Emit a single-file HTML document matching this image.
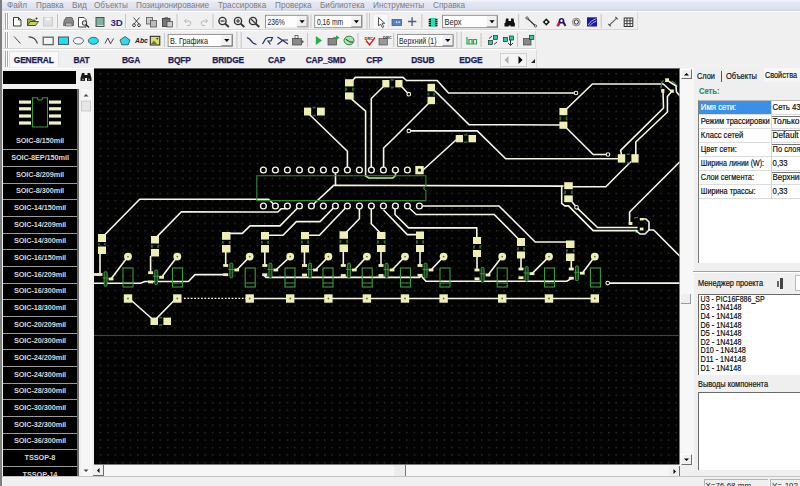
<!DOCTYPE html>
<html><head><meta charset="utf-8">
<style>
*{margin:0;padding:0;box-sizing:border-box}
html,body{width:800px;height:486px;overflow:hidden;background:#f0f0f0;font-family:"Liberation Sans", sans-serif;position:relative}
.a{position:absolute}
#menu{left:0;top:0;width:800px;height:11px;background:linear-gradient(#f3f5fb 0px,#e4e7f3 3px,#dee1ef 8.5px,#d3d5df 10px,#d6d8e0 11px)}
#menu span{position:absolute;top:2px;font-size:8.2px;color:#7c7c7c;line-height:8px;white-space:nowrap}
.tab{position:absolute;top:55.5px;width:60px;text-align:center;font-size:8.4px;font-weight:bold;color:#1c1c58;line-height:9px;-webkit-text-stroke:0.25px #1c1c58;letter-spacing:-0.15px}
.sep{position:absolute;left:0;width:75px;height:1px;background:#9c9c9c}
.it{position:absolute;left:0;width:74px;color:#d6d6d6;font-weight:bold;font-size:7.9px;line-height:10px;text-align:center;white-space:nowrap;letter-spacing:-0.1px;transform:scaleX(0.93)}
.pr{position:absolute;height:14.1px;font-size:7.9px;line-height:14px;padding-left:2px;white-space:nowrap;overflow:hidden}
.pv{background:#fff;border-left:1px solid #777;border-top:1px solid #777;color:#111;line-height:12px}
.hl{position:absolute;left:0;width:112px;height:1px;background:#d8d8d8}
.ic{position:absolute}
</style></head><body>
<div id="menu" class="a"><span style="left:7px">Файл</span><span style="left:36px">Правка</span><span style="left:72px">Вид</span><span style="left:94px">Объекты</span><span style="left:136px">Позиционирование</span><span style="left:218px">Трассировка</span><span style="left:275px">Проверка</span><span style="left:320px">Библиотека</span><span style="left:373px">Инструменты</span><span style="left:433px">Справка</span></div>
<div class="a" style="left:0;top:10.5px;width:800px;height:1px;background:#fbfbfd"></div>

<!-- toolbars -->
<div class="a" style="left:3px;top:11px;width:635px;height:19px;border-right:1px solid #dcdcdc;border-bottom:1px solid #d6d6d6;border-top:1px solid #fff"></div>
<div class="a" style="left:3px;top:30px;width:533px;height:19px;border-right:1px solid #dcdcdc;border-bottom:1px solid #d6d6d6;border-top:1px solid #fff"></div>
<div class="a" style="left:3px;top:49px;width:534px;height:19px;border-right:1px solid #dcdcdc;border-top:1px solid #fff"></div>
<svg class="a" style="left:0;top:0" width="800" height="68" viewBox="0 0 800 68">
<g stroke-width="1" fill="none">
<!-- grips -->
<path d="M5.5,13 V29 M7.5,13 V29 M5.5,32 V48 M7.5,32 V48 M5.5,51 V67 M7.5,51 V67" stroke="#a8a8a8"/>
<path d="M6.5,13 V29 M8.5,13 V29 M6.5,32 V48 M8.5,32 V48 M6.5,51 V67 M8.5,51 V67" stroke="#fff"/>
<!-- separators tb1 -->
<path d="M57.5,14 V28 M125.5,14 V28 M177,14 V28 M213,14 V28 M311,14 V28 M367,13 V29 M369.5,13 V29 M421.9,14 V28 M518.7,14 V28 M601.2,14 V28" stroke="#c4c4c4"/>
<!-- separators tb2 -->
<path d="M164.4,33 V47 M236.9,32 V48 M241.2,32 V48 M307.5,33 V47 M358,33 V47 M393.7,33 V47 M456.9,32 V48 M461.2,32 V48 M481,33 V47 M517.5,33 V47" stroke="#c4c4c4"/>
</g>
<!-- TB1 icons -->
<!-- new -->
<path d="M13.5,17.5 H18.5 L21,20 V26 H13.5 Z" fill="#fff" stroke="#222" stroke-width="0.9"/>
<path d="M18.5,17.5 V20 H21" fill="none" stroke="#222" stroke-width="0.8"/>
<!-- open -->
<path d="M27.5,19 H31 L32,20 H35 V25.5 H27.5 Z" fill="#a8b040" stroke="#333" stroke-width="0.8"/>
<path d="M27.5,25.5 L30,21.5 H38.5 L35.5,25.5 Z" fill="#c8d060" stroke="#333" stroke-width="0.8"/>
<circle cx="36.5" cy="18.5" r="0.9" fill="#222"/>
<!-- save gray -->
<rect x="43.5" y="17.5" width="9" height="8.5" fill="#e0e0e0" stroke="#c8c8c8" stroke-width="0.9"/>
<rect x="45.5" y="17.5" width="5" height="3" fill="#f4f4f4"/>
<!-- print -->
<path d="M64,21 L66,17.5 H72 L73.5,21 V25.5 H63.5 Z" fill="#8a8a8a" stroke="#555" stroke-width="0.8"/>
<rect x="65.5" y="23" width="6.5" height="3" fill="#b8b8b8" stroke="#555" stroke-width="0.6"/>
<!-- preview -->
<path d="M78.5,17.5 H84 L86,19.5 V27 H78.5 Z" fill="#fff" stroke="#333" stroke-width="0.9"/>
<circle cx="84.5" cy="23" r="2.3" fill="#dde" stroke="#333" stroke-width="1"/>
<path d="M86,24.5 L89,27.5" stroke="#222" stroke-width="1.3"/>
<!-- board -->
<rect x="96" y="17.5" width="8" height="9" fill="#7fb0a0" stroke="#444" stroke-width="0.9"/>
<rect x="97.5" y="25" width="6" height="1" fill="#ddd"/>
<!-- 3D -->
<text x="110.5" y="26" font-family="Liberation Sans" font-weight="bold" font-size="9.6" fill="#2a2a80">3D</text>
<!-- scissors -->
<path d="M133.5,17.5 L139,24 M139.5,17.5 L134,24" stroke="#333" stroke-width="0.9"/>
<circle cx="134" cy="25.2" r="1.4" fill="none" stroke="#333" stroke-width="0.9"/>
<circle cx="139" cy="25.2" r="1.4" fill="none" stroke="#333" stroke-width="0.9"/>
<!-- copy -->
<rect x="146.5" y="17.5" width="6" height="6.5" fill="#ccc" stroke="#555" stroke-width="0.8"/>
<rect x="150.5" y="20.5" width="6" height="6.5" fill="#bbb" stroke="#555" stroke-width="0.8"/>
<!-- paste -->
<rect x="162.5" y="18.5" width="7.5" height="8" fill="#777" stroke="#333" stroke-width="0.8"/>
<rect x="164.5" y="17.3" width="3.5" height="2" fill="#555"/>
<rect x="167" y="21.5" width="5.5" height="5.5" fill="#ccc" stroke="#444" stroke-width="0.7"/>
<!-- undo redo gray -->
<path d="M184.5,21 L186.5,19 M184.5,21 L186.5,23 M184.5,21 H189 A2.3,2.3 0 0 1 189,25.5 H187" fill="none" stroke="#b8b8b8" stroke-width="1"/>
<path d="M207.5,21 L205.5,19 M207.5,21 L205.5,23 M207.5,21 H203 A2.3,2.3 0 0 0 203,25.5 H205" fill="none" stroke="#b8b8b8" stroke-width="1"/>
<!-- zooms -->
<g stroke="#333" fill="#e8eef0">
<circle cx="222.5" cy="21" r="3.6" stroke-width="1.4"/><path d="M225,23.5 L228.8,27" stroke-width="1.8"/><path d="M220.5,21 H224.5" stroke-width="1.2"/>
<circle cx="238" cy="21" r="3.6" stroke-width="1.4"/><path d="M240.5,23.5 L244.3,27" stroke-width="1.8"/><path d="M236,21 H240 M238,19 V23" stroke-width="1.1"/>
<circle cx="253" cy="21" r="3.6" stroke-width="1.4"/><path d="M255.5,23.5 L259.3,27" stroke-width="1.8"/><path d="M251,19 L255,23" stroke-width="1.1"/>
</g>
<!-- arrow cursor pressed bg -->
<rect x="373" y="14" width="15" height="15" fill="#f8f8f8" stroke="#e0e0e0" stroke-width="0.8"/>
<path d="M378.5,17.5 V26 L380.5,24 L382.5,27.5 L383.8,26.8 L382,23.3 H384.8 Z" fill="#fff" stroke="#444" stroke-width="0.9"/>
<!-- blue rect -->
<rect x="392" y="19.5" width="9.5" height="6" fill="#5a82c8" stroke="#33508a" stroke-width="0.7"/>
<rect x="396" y="21.5" width="1.3" height="1.3" fill="#fff"/><rect x="398.5" y="21.5" width="1.3" height="1.3" fill="#fff"/>
<!-- plus -->
<path d="M408,21.5 H416.3 M412.1,17.3 V26" stroke="#556070" stroke-width="1.4"/>
<!-- chip -->
<rect x="430" y="17.9" width="6.2" height="8.9" fill="#26dcb0"/>
<g fill="#111"><rect x="428.7" y="18.8" width="2.2" height="1.5"/><rect x="428.7" y="20.8" width="2.2" height="1.5"/><rect x="428.7" y="22.8" width="2.2" height="1.5"/><rect x="428.7" y="24.8" width="2.2" height="1.5"/>
<rect x="435.3" y="18.8" width="2.2" height="1.5"/><rect x="435.3" y="20.8" width="2.2" height="1.5"/><rect x="435.3" y="22.8" width="2.2" height="1.5"/><rect x="435.3" y="24.8" width="2.2" height="1.5"/></g>
<!-- binoculars -->
<path d="M505,25.5 L506,18.5 H508.5 V21 H511 V18.5 H513.5 L514.8,25.5 Z" fill="#111"/>
<rect x="504.5" y="23" width="4.3" height="3.5" fill="#111"/><rect x="510.5" y="23" width="4.3" height="3.5" fill="#111"/>
<!-- wire -->
<path d="M527,18 L535.5,26" stroke="#333" stroke-width="1.1"/>
<circle cx="527" cy="18" r="1.2" fill="#ddd" stroke="#333" stroke-width="0.7"/><circle cx="535.5" cy="26" r="1.2" fill="#ddd" stroke="#333" stroke-width="0.7"/>
<!-- diamond pad -->
<path d="M546.3,18.3 L550,22 L546.3,25.7 L542.6,22 Z" fill="#111" stroke="#8c8" stroke-width="0.4"/>
<circle cx="546.3" cy="22" r="1.2" fill="#fff"/>
<!-- A icon -->
<path d="M558,26 L560.5,20.5 M565.5,26 L562.5,20.5" stroke="#1a1a70" stroke-width="2"/>
<path d="M557.2,26.2 L559.6,21.5" stroke="#d82050" stroke-width="2"/>
<circle cx="561.5" cy="20.8" r="2.8" fill="#1a1a70"/>
<circle cx="561.5" cy="20.8" r="1.2" fill="#fff"/>
<!-- ring -->
<circle cx="576.3" cy="22" r="3.9" fill="#d8d8d8" stroke="#888" stroke-width="0.9"/>
<circle cx="576.3" cy="22" r="2.1" fill="#fff" stroke="#333" stroke-width="1"/>
<!-- blue square -->
<rect x="587" y="17.3" width="10" height="9.2" fill="#1818a8"/>
<path d="M588,25 Q591,20 596.5,18.5 M589.5,26 Q592.5,22 596.5,21" fill="none" stroke="#d8d8f8" stroke-width="0.8"/>
<!-- measure -->
<path d="M609,25.5 L617,17.8" stroke="#666" stroke-width="1.1"/>
<path d="M608.3,23.8 L610.8,26.3 M615.3,16.8 L617.8,19.3" stroke="#555" stroke-width="1.2"/>
<!-- grid -->
<rect x="624.2" y="18" width="8.6" height="8.5" fill="#f4f4f4" stroke="#333" stroke-width="1"/>
<path d="M627,18 V26.5 M630,18 V26.5 M624.2,20.8 H632.8 M624.2,23.6 H632.8" stroke="#333" stroke-width="0.9"/>

<!-- combos tb1 -->
<g>
<rect x="265.5" y="15.3" width="42.5" height="12.4" fill="#fdfdfd" stroke="#8a8a8a" stroke-width="0.9"/>
<path d="M266,27.3 H307.6 V15.7" stroke="#fff" fill="none"/>
<rect x="297" y="16.2" width="10.2" height="10.6" fill="#f0f0f0"/><path d="M297,26.8 H307.2 V16.2" stroke="#777" stroke-width="0.8" fill="none"/>
<path d="M299.5,20.2 H304.7 L302.1,23.2 Z" fill="#000"/>
<text x="267.5" y="24.5" font-family="Liberation Sans" font-size="8.4" fill="#222" textLength="17.2" lengthAdjust="spacingAndGlyphs">236%</text>
<rect x="314.7" y="15.3" width="47.3" height="12.4" fill="#fdfdfd" stroke="#8a8a8a" stroke-width="0.9"/>
<rect x="351.3" y="16.2" width="10.2" height="10.6" fill="#f0f0f0"/><path d="M351.3,26.8 H361.5 V16.2" stroke="#777" stroke-width="0.8" fill="none"/>
<path d="M353.8,20.2 H359.0 L356.4,23.2 Z" fill="#000"/>
<text x="317" y="24.5" font-family="Liberation Sans" font-size="8.4" fill="#222" textLength="26.2" lengthAdjust="spacingAndGlyphs">0,16 mm</text>
<rect x="442.5" y="15.3" width="55" height="12.4" fill="#fdfdfd" stroke="#8a8a8a" stroke-width="0.9"/>
<rect x="486.9" y="16.2" width="10.2" height="10.6" fill="#f0f0f0"/><path d="M486.9,26.8 H497.1 V16.2" stroke="#777" stroke-width="0.8" fill="none"/>
<path d="M489.4,20.2 H494.6 L492.0,23.2 Z" fill="#000"/>
<text x="444.5" y="24.5" font-family="Liberation Sans" font-size="8.4" fill="#222" textLength="17" lengthAdjust="spacingAndGlyphs">Верх</text>
</g>
<!-- combos tb2 -->
<g>
<rect x="168.1" y="34.4" width="64.4" height="12" fill="#fdfdfd" stroke="#8a8a8a" stroke-width="0.9"/>
<rect x="221.5" y="35.3" width="10.5" height="10.3" fill="#f0f0f0"/><path d="M221.5,45.6 H232 V35.3" stroke="#777" stroke-width="0.8" fill="none"/>
<path d="M224.2,39.1 H229.4 L226.8,42.1 Z" fill="#000"/>
<text x="170" y="43.6" font-family="Liberation Sans" font-size="8.4" fill="#222" textLength="38" lengthAdjust="spacingAndGlyphs">В. Графика</text>
<rect x="397.5" y="34.4" width="55.5" height="12" fill="#fdfdfd" stroke="#8a8a8a" stroke-width="0.9"/>
<rect x="442.5" y="35.3" width="10.5" height="10.3" fill="#f0f0f0"/><path d="M442.5,45.6 H453 V35.3" stroke="#777" stroke-width="0.8" fill="none"/>
<path d="M445.2,39.1 H450.4 L447.8,42.1 Z" fill="#000"/>
<text x="399" y="43.6" font-family="Liberation Sans" font-size="8.2" fill="#222" textLength="37.5" lengthAdjust="spacingAndGlyphs">Верхний (1)</text>
</g>

<!-- TB2 icons -->
<path d="M14,36.5 L20.5,43.5" stroke="#444" stroke-width="1"/>
<path d="M28.5,36.8 Q35,36.5 37.5,43.5" fill="none" stroke="#444" stroke-width="1.2"/>
<rect x="43.2" y="37.2" width="10" height="7.4" fill="#f4f4f4" stroke="#666" stroke-width="1.3"/>
<rect x="58.5" y="37" width="10" height="7.4" fill="#20e0f0" stroke="#445" stroke-width="0.9"/>
<ellipse cx="78.4" cy="40.8" rx="5" ry="3.3" fill="#f8f8f8" stroke="#555" stroke-width="0.9"/>
<ellipse cx="93.4" cy="40.8" rx="5" ry="3.5" fill="#20e0f0" stroke="#345" stroke-width="0.8"/>
<path d="M105,43.5 L107.8,38 L110.5,43.8 L113.5,38.5" fill="none" stroke="#333" stroke-width="0.9"/>
<path d="M125,36.5 L130,40 L128.2,44.8 H121.8 L120,40 Z" fill="#30d8e8" stroke="#345" stroke-width="0.8"/>
<text x="135" y="43.3" font-family="Liberation Sans" font-weight="bold" font-style="italic" font-size="6.8" fill="#222">Abc</text>
<rect x="150.3" y="36.3" width="9.5" height="8.7" fill="#d8e070" stroke="#222" stroke-width="1"/>
<path d="M151,44 L154,40.5 L157,44 Z" fill="#707830"/><circle cx="157.3" cy="38.6" r="0.9" fill="#333"/>
<!-- route icons -->
<path d="M247,37.5 L249.5,39 L253,43 L256.5,44.5" fill="none" stroke="#223366" stroke-width="1.3"/>
<path d="M262.5,44 L265.5,39 L268,37.5 H272.5 L271,41 H268 L270.5,44.5" fill="none" stroke="#223366" stroke-width="1.2"/>
<path d="M277.5,37 L288,44 M277.5,44.5 L283,40 H288" fill="none" stroke="#223366" stroke-width="1.2"/>
<rect x="292.5" y="38.5" width="9" height="6.5" fill="#888" stroke="#444" stroke-width="0.7"/><rect x="295" y="35.5" width="3" height="3" fill="none" stroke="#444" stroke-width="0.7"/>
<path d="M302,40 L304,41.8 L302,43.5 Z" fill="#555"/>
<path d="M315.8,36 L322,40.5 L315.8,45 Z" fill="#28b040"/>
<rect x="328" y="38.5" width="8.5" height="6.5" fill="#888" stroke="#444" stroke-width="0.7"/>
<path d="M333,37.8 H337.5 M336,36 L338.5,37.8 L336,39.6" fill="none" stroke="#2a9a40" stroke-width="1.2"/>
<ellipse cx="349" cy="40.5" rx="5" ry="4.3" fill="#a8e0a8" stroke="#2a8a40" stroke-width="1"/>
<path d="M345.5,39 L350,42 H353" fill="none" stroke="#224" stroke-width="0.9"/>
<text x="364.5" y="40" font-family="Liberation Sans" font-weight="bold" font-size="4" fill="#333">DRC</text>
<path d="M366,40.5 L369.5,44.8 L375,37.5" fill="none" stroke="#d02020" stroke-width="1.4"/>
<rect x="379" y="38.5" width="8.5" height="6.5" fill="#999" stroke="#555" stroke-width="0.7"/>
<text x="383" y="38.6" font-family="Liberation Sans" font-weight="bold" font-size="4" fill="#333">DRC</text>
<path d="M467,37 V44 H477 M469,44 V39.5 H472 V44 M473.5,44 V39.5 H476.5 V44" fill="none" stroke="#28a848" stroke-width="1.2"/>
<rect x="488.5" y="40.5" width="4" height="4" fill="#40c0a0" stroke="#133" stroke-width="0.7"/><rect x="493.5" y="35.5" width="4" height="4" fill="#40c0a0" stroke="#133" stroke-width="0.7"/>
<path d="M489,38.5 L492,36 M497,42 L494,44.5" stroke="#222" stroke-width="0.9"/>
<rect x="503.5" y="37.5" width="4" height="4" fill="#40c0a0" stroke="#133" stroke-width="0.7"/><rect x="509.5" y="36" width="4" height="4" fill="#40c0a0" stroke="#133" stroke-width="0.7"/>
<path d="M508,43 L510.5,45.5 L513,43 M510.5,40 V45" fill="none" stroke="#222" stroke-width="0.9"/>
<rect x="523.5" y="38.5" width="7.5" height="6.5" fill="#888" stroke="#444" stroke-width="0.7"/>
<rect x="529.5" y="35.3" width="4.3" height="4.3" fill="#40c0a0" stroke="#133" stroke-width="0.7"/>
</svg>


<!-- tab row -->
<div class="a" style="left:8.5px;top:50.5px;width:50px;height:16px;background:#f9f9f9;border:1px solid #e2e2e2;border-bottom:none"></div>
<span class="tab" style="left:3.75px">GENERAL</span><span class="tab" style="left:51.5px">BAT</span><span class="tab" style="left:101.0px">BGA</span><span class="tab" style="left:149.35px">BQFP</span><span class="tab" style="left:198.14999999999998px">BRIDGE</span><span class="tab" style="left:246.60000000000002px">CAP</span><span class="tab" style="left:295.65px">CAP_SMD</span><span class="tab" style="left:344.4px">CFP</span><span class="tab" style="left:392.75px">DSUB</span><span class="tab" style="left:440.95px">EDGE</span>
<div class="a" style="left:500px;top:52.5px;width:27px;height:14px;border:1px solid #d0d0d0;background:#f4f4f4"></div>
<svg class="a" style="left:500px;top:52px" width="40" height="16" viewBox="0 0 40 16">
<path d="M8.5,4 L4.5,8 L8.5,12 Z" fill="#b0b0b0"/><path d="M18.5,4 L22.5,8 L18.5,12 Z" fill="#000"/>
<path d="M31,11 L35,7 L35,11 Z" fill="#222"/>
</svg>
<div class="a" style="left:3px;top:67.5px;width:91px;height:1px;background:#fff"></div>

<!-- left panel -->
<div class="a" style="left:3px;top:71.4px;width:73px;height:12.4px;background:#000"></div>
<svg class="a" style="left:80px;top:72px" width="12" height="10" viewBox="0 0 12 10">
<path d="M2,1 h2.5 v2 h3 v-2 h2.5 l1.5,5 v3 h-4.5 v-3 h-2 v3 h-4.5 v-3 Z" fill="#1a1a1a"/>
<circle cx="3" cy="7.6" r="1" fill="#888"/><circle cx="9" cy="7.6" r="1" fill="#888"/>
</svg>
<div class="a" style="left:3px;top:89.3px;width:74px;height:387px;background:#000;overflow:hidden">
<svg style="position:absolute;left:0;top:0" width="74" height="60" viewBox="0 0 74 60">
<g fill="#f2f0c8">
<rect x="16" y="11.5" width="12" height="3.2"/><rect x="16" y="18.2" width="12" height="3.2"/><rect x="16" y="25.4" width="12" height="3.2"/><rect x="16" y="32.4" width="12" height="3.2"/>
<rect x="46" y="11.5" width="12" height="3.2"/><rect x="46" y="18.2" width="12" height="3.2"/><rect x="46" y="25.4" width="12" height="3.2"/><rect x="46" y="32.4" width="12" height="3.2"/>
</g>
<path d="M29.5,8.7 H34.5 A2.5,2.5 0 0 0 39.5,8.7 H44.5 V38 H29.5 Z" fill="none" stroke="#3a9a3a" stroke-width="1.1"/>
</svg>
<div class="it" style="top:46.5px">SOIC-8/150mil</div>
<div class="sep" style="top:60px"></div><div class="it" style="top:63.80px">SOIC-8EP/150mil</div><div class="sep" style="top:77px"></div><div class="it" style="top:80.47px">SOIC-8/209mil</div><div class="sep" style="top:94px"></div><div class="it" style="top:97.14px">SOIC-8/300mil</div><div class="sep" style="top:110px"></div><div class="it" style="top:113.81px">SOIC-14/150mil</div><div class="sep" style="top:127px"></div><div class="it" style="top:130.48px">SOIC-14/209mil</div><div class="sep" style="top:144px"></div><div class="it" style="top:147.15px">SOIC-14/300mil</div><div class="sep" style="top:160px"></div><div class="it" style="top:163.82px">SOIC-16/150mil</div><div class="sep" style="top:177px"></div><div class="it" style="top:180.49px">SOIC-16/209mil</div><div class="sep" style="top:194px"></div><div class="it" style="top:197.16px">SOIC-16/300mil</div><div class="sep" style="top:210px"></div><div class="it" style="top:213.83px">SOIC-18/300mil</div><div class="sep" style="top:227px"></div><div class="it" style="top:230.50px">SOIC-20/209mil</div><div class="sep" style="top:244px"></div><div class="it" style="top:247.17px">SOIC-20/300mil</div><div class="sep" style="top:260px"></div><div class="it" style="top:263.84px">SOIC-24/209mil</div><div class="sep" style="top:277px"></div><div class="it" style="top:280.51px">SOIC-24/300mil</div><div class="sep" style="top:294px"></div><div class="it" style="top:297.18px">SOIC-28/300mil</div><div class="sep" style="top:310px"></div><div class="it" style="top:313.85px">SOIC-30/300mil</div><div class="sep" style="top:327px"></div><div class="it" style="top:330.52px">SOIC-32/300mil</div><div class="sep" style="top:344px"></div><div class="it" style="top:347.19px">SOIC-36/300mil</div><div class="sep" style="top:360px"></div><div class="it" style="top:363.86px">TSSOP-8</div><div class="sep" style="top:377px"></div><div class="it" style="top:380.53px">TSSOP-14</div>
</div>
<div class="a" style="left:77px;top:89.3px;width:1.5px;height:387px;background:#6c6c6c"></div>
<div class="a" style="left:80.5px;top:89.3px;width:11.5px;height:387px;background:#f6f6f6"></div>
<svg class="a" style="left:80px;top:90px" width="12" height="24" viewBox="0 0 12 24">
<path d="M3.5,6.5 L6,4 L8.5,6.5 Z" fill="#444"/>
<rect x="1.5" y="11" width="9" height="10" fill="#e6e6e6" stroke="#c4c4c4" stroke-width="0.8"/>
</svg>
<svg class="a" style="left:80px;top:464px" width="12" height="12" viewBox="0 0 12 12">
<path d="M3.5,5.5 L6,8 L8.5,5.5 Z" fill="#444"/>
</svg>

<!-- pcb -->
<svg class="a" style="left:0;top:0" width="800" height="486" viewBox="0 0 800 486">
<defs>
<pattern id="grid" x="99.7" y="73.1" width="7.475" height="7.475" patternUnits="userSpaceOnUse">
<rect x="0" y="0" width="1.4" height="1.4" fill="#2f2f2f"/>
</pattern>
<clipPath id="pc"><rect x="94" y="69" width="585.5" height="395.5"/></clipPath>
</defs>
<g clip-path="url(#pc)">
<rect x="94" y="69" width="586" height="396" fill="#030303"/>
<rect x="94" y="69" width="586" height="396" fill="url(#grid)"/>
<polyline points="310,115 347.4,151.3 347.4,168" fill="none" stroke="#f6f6e6" stroke-width="1.6" stroke-linejoin="round" stroke-linecap="round"/>
<polyline points="353,80 355.3,77.4 403,77.4 406.5,80.5 437.2,80.5 448.5,93 576,93" fill="none" stroke="#f6f6e6" stroke-width="1.6" stroke-linejoin="round" stroke-linecap="round"/>
<polyline points="352,99.3 365.6,111.2 365.6,176" fill="none" stroke="#f6f6e6" stroke-width="1.6" stroke-linejoin="round" stroke-linecap="round"/>
<polyline points="365.6,176 369,178 393,178 395.5,175.5 395.5,170" fill="none" stroke="#b8e890" stroke-width="1.6" stroke-linejoin="round" stroke-linecap="round"/>
<polyline points="383,87 371.3,98.5 371.3,170" fill="none" stroke="#f6f6e6" stroke-width="1.6" stroke-linejoin="round" stroke-linecap="round"/>
<polyline points="402,87 408.8,94.2" fill="none" stroke="#f6f6e6" stroke-width="1.6" stroke-linejoin="round" stroke-linecap="round"/>
<polyline points="435,91 469,124.6 560,125" fill="none" stroke="#f6f6e6" stroke-width="1.6" stroke-linejoin="round" stroke-linecap="round"/>
<polyline points="428,104 394,138 383.6,148 383.6,170" fill="none" stroke="#f6f6e6" stroke-width="1.6" stroke-linejoin="round" stroke-linecap="round"/>
<polyline points="408.8,130.9 477.3,130.9 505.7,158.7 618,158.7" fill="none" stroke="#f6f6e6" stroke-width="1.6" stroke-linejoin="round" stroke-linecap="round"/>
<polyline points="419.5,170 423,170 456,140" fill="none" stroke="#f6f6e6" stroke-width="1.6" stroke-linejoin="round" stroke-linecap="round"/>
<polyline points="567,108.5 592.4,84 663.3,84 670.5,90.5" fill="none" stroke="#f6f6e6" stroke-width="1.6" stroke-linejoin="round" stroke-linecap="round"/>
<polyline points="567,128.5 593.2,154.5 608,154.5" fill="none" stroke="#f6f6e6" stroke-width="1.6" stroke-linejoin="round" stroke-linecap="round"/>
<polyline points="663,91 663.5,108 620.6,150.4 621.5,155" fill="none" stroke="#f6f6e6" stroke-width="1.6" stroke-linejoin="round" stroke-linecap="round"/>
<polyline points="672,91 667.4,96.5 667.4,112 635.8,142 635.8,155" fill="none" stroke="#f6f6e6" stroke-width="1.6" stroke-linejoin="round" stroke-linecap="round"/>
<polyline points="630.5,162 605.8,186.7 573,186.7" fill="none" stroke="#f6f6e6" stroke-width="1.6" stroke-linejoin="round" stroke-linecap="round"/>
<polyline points="563,186.1 334,185.2 311.5,206" fill="none" stroke="#f6f6e6" stroke-width="1.6" stroke-linejoin="round" stroke-linecap="round"/>
<polyline points="335.5,170 335.5,185.2" fill="none" stroke="#f6f6e6" stroke-width="1.6" stroke-linejoin="round" stroke-linecap="round"/>
<polyline points="561.7,186.1 561.7,203.4 564.8,205.9 568.5,205.9 593.2,230.6 637,230.6" fill="none" stroke="#f6f6e6" stroke-width="1.6" stroke-linejoin="round" stroke-linecap="round"/>
<polyline points="572.5,202.5 576.5,207.3" fill="none" stroke="#f6f6e6" stroke-width="1.6" stroke-linejoin="round" stroke-linecap="round"/>
<polyline points="576.5,207.3 597.5,227.5 637,227.5" fill="none" stroke="#f6f6e6" stroke-width="1.6" stroke-linejoin="round" stroke-linecap="round"/>
<polyline points="679.6,162 629.6,212 629.6,224" fill="none" stroke="#f6f6e6" stroke-width="1.6" stroke-linejoin="round" stroke-linecap="round"/>
<polyline points="641,219 646,219 649,222 649,230 645,234 640,234 636,230.6" fill="none" stroke="#f6f6e6" stroke-width="1.6" stroke-linejoin="round" stroke-linecap="round"/>
<polyline points="649,230 653.7,230 680,256.3" fill="none" stroke="#f6f6e6" stroke-width="1.6" stroke-linejoin="round" stroke-linecap="round"/>
<polyline points="607.7,283.1 680,283.1" fill="none" stroke="#f6f6e6" stroke-width="1.6" stroke-linejoin="round" stroke-linecap="round"/>
<polyline points="105.3,234.3 139.7,199.3 268.6,199.3 275.5,206" fill="none" stroke="#f6f6e6" stroke-width="1.6" stroke-linejoin="round" stroke-linecap="round"/>
<polyline points="156.8,236.9 181.4,211.8 277.8,212 281.4,208.7 287.5,208.7 287.5,206" fill="none" stroke="#f6f6e6" stroke-width="1.6" stroke-linejoin="round" stroke-linecap="round"/>
<polyline points="299.5,206 280,225.9 250,225.9 242.4,233.4 226,233.4" fill="none" stroke="#f6f6e6" stroke-width="1.6" stroke-linejoin="round" stroke-linecap="round"/>
<polyline points="335.4,206 320,221.6 296.4,221.6 283,235.2 265,235.2" fill="none" stroke="#f6f6e6" stroke-width="1.6" stroke-linejoin="round" stroke-linecap="round"/>
<polyline points="347.3,206 319.4,235.3 305,235.3" fill="none" stroke="#f6f6e6" stroke-width="1.6" stroke-linejoin="round" stroke-linecap="round"/>
<polyline points="359.4,206 359.4,218.8 347.5,231 344,234" fill="none" stroke="#f6f6e6" stroke-width="1.6" stroke-linejoin="round" stroke-linecap="round"/>
<polyline points="371.3,206 371.3,223.8 379.3,232" fill="none" stroke="#f6f6e6" stroke-width="1.6" stroke-linejoin="round" stroke-linecap="round"/>
<polyline points="384,210.5 407.3,234.6 420,234.6" fill="none" stroke="#f6f6e6" stroke-width="1.6" stroke-linejoin="round" stroke-linecap="round"/>
<polyline points="395,206 395,214.5 408.6,227.9 476.8,227.9 476.8,240" fill="none" stroke="#f6f6e6" stroke-width="1.6" stroke-linejoin="round" stroke-linecap="round"/>
<polyline points="407,206 416.3,214.5 494.2,214.5 517.5,238" fill="none" stroke="#f6f6e6" stroke-width="1.6" stroke-linejoin="round" stroke-linecap="round"/>
<polyline points="419.5,206 499,206 535.2,242 570,242" fill="none" stroke="#f6f6e6" stroke-width="1.6" stroke-linejoin="round" stroke-linecap="round"/>
<polyline points="94,283.3 140.3,283.3 145,281.5 188.4,281.5 195,274.6 227,274.6" fill="none" stroke="#f6f6e6" stroke-width="1.6" stroke-linejoin="round" stroke-linecap="round"/>
<polyline points="263.2,274.7 266,277.4 420,277.4 420.3,275" fill="none" stroke="#f6f6e6" stroke-width="1.6" stroke-linejoin="round" stroke-linecap="round"/>
<polyline points="420.3,275 426,281.2 567,281.2 572,278" fill="none" stroke="#f6f6e6" stroke-width="1.6" stroke-linejoin="round" stroke-linecap="round"/>
<polyline points="253,298.5 594,298.5" fill="none" stroke="#f6f6e6" stroke-width="1.6" stroke-linejoin="round" stroke-linecap="round"/>
<line x1="184" y1="298.3" x2="246" y2="298.3" stroke="#f6f6e6" stroke-width="1.3" stroke-dasharray="1.8 1.6"/>
<polyline points="128,297.5 154,320.5" fill="none" stroke="#f6f6e6" stroke-width="1.6" stroke-linejoin="round" stroke-linecap="round"/>
<polyline points="177,297.5 155.5,319.5" fill="none" stroke="#f6f6e6" stroke-width="1.6" stroke-linejoin="round" stroke-linecap="round"/>
<polyline points="100.0,254 100.0,274.5" fill="none" stroke="#f6f6e6" stroke-width="1.6" stroke-linejoin="round" stroke-linecap="round"/>
<polyline points="111.0,279.0 128.0,256.6" fill="none" stroke="#f6f6e6" stroke-width="1.6" stroke-linejoin="round" stroke-linecap="round"/>
<rect x="123.0" y="268" width="10.0" height="19" fill="none" stroke="#3f9a3f" stroke-width="1.1"/>
<polyline points="123.5,283 132.5,283" fill="none" stroke="#3f9a3f" stroke-width="1.0" stroke-linejoin="round" stroke-linecap="round"/>
<polyline points="150.6,256.5 150.6,272.7" fill="none" stroke="#f6f6e6" stroke-width="1.6" stroke-linejoin="round" stroke-linecap="round"/>
<polyline points="161.6,277.3 177.3,256.6" fill="none" stroke="#f6f6e6" stroke-width="1.6" stroke-linejoin="round" stroke-linecap="round"/>
<rect x="172.5" y="268" width="10.0" height="19" fill="none" stroke="#3f9a3f" stroke-width="1.1"/>
<polyline points="173.0,283 182.0,283" fill="none" stroke="#3f9a3f" stroke-width="1.0" stroke-linejoin="round" stroke-linecap="round"/>
<polyline points="225.7,252.5 225.7,265.5" fill="none" stroke="#f6f6e6" stroke-width="1.6" stroke-linejoin="round" stroke-linecap="round"/>
<polyline points="236.7,270.0 249.7,256.6" fill="none" stroke="#f6f6e6" stroke-width="1.6" stroke-linejoin="round" stroke-linecap="round"/>
<rect x="245.2" y="268" width="10.0" height="19" fill="none" stroke="#3f9a3f" stroke-width="1.1"/>
<polyline points="245.7,283 254.7,283" fill="none" stroke="#3f9a3f" stroke-width="1.0" stroke-linejoin="round" stroke-linecap="round"/>
<polyline points="264.8,252.5 264.8,265.5" fill="none" stroke="#f6f6e6" stroke-width="1.6" stroke-linejoin="round" stroke-linecap="round"/>
<polyline points="275.8,270.0 290.2,256.6" fill="none" stroke="#f6f6e6" stroke-width="1.6" stroke-linejoin="round" stroke-linecap="round"/>
<rect x="285.0" y="268" width="10.0" height="19" fill="none" stroke="#3f9a3f" stroke-width="1.1"/>
<polyline points="285.5,283 294.5,283" fill="none" stroke="#3f9a3f" stroke-width="1.0" stroke-linejoin="round" stroke-linecap="round"/>
<polyline points="304.5,252.5 304.5,265.5" fill="none" stroke="#f6f6e6" stroke-width="1.6" stroke-linejoin="round" stroke-linecap="round"/>
<polyline points="315.5,270.0 328.4,256.6" fill="none" stroke="#f6f6e6" stroke-width="1.6" stroke-linejoin="round" stroke-linecap="round"/>
<rect x="323.0" y="268" width="10.0" height="19" fill="none" stroke="#3f9a3f" stroke-width="1.1"/>
<polyline points="323.5,283 332.5,283" fill="none" stroke="#3f9a3f" stroke-width="1.0" stroke-linejoin="round" stroke-linecap="round"/>
<polyline points="343.3,252 343.3,265.5" fill="none" stroke="#f6f6e6" stroke-width="1.6" stroke-linejoin="round" stroke-linecap="round"/>
<polyline points="354.3,270.0 366.9,256.6" fill="none" stroke="#f6f6e6" stroke-width="1.6" stroke-linejoin="round" stroke-linecap="round"/>
<rect x="362.2" y="268" width="10.0" height="19" fill="none" stroke="#3f9a3f" stroke-width="1.1"/>
<polyline points="362.7,283 371.7,283" fill="none" stroke="#3f9a3f" stroke-width="1.0" stroke-linejoin="round" stroke-linecap="round"/>
<polyline points="381.0,252 381.0,265.5" fill="none" stroke="#f6f6e6" stroke-width="1.6" stroke-linejoin="round" stroke-linecap="round"/>
<polyline points="392.0,270.0 405.0,256.6" fill="none" stroke="#f6f6e6" stroke-width="1.6" stroke-linejoin="round" stroke-linecap="round"/>
<rect x="400.5" y="268" width="10.0" height="19" fill="none" stroke="#3f9a3f" stroke-width="1.1"/>
<polyline points="401.0,283 410.0,283" fill="none" stroke="#3f9a3f" stroke-width="1.0" stroke-linejoin="round" stroke-linecap="round"/>
<polyline points="420.0,252 420.0,265.5" fill="none" stroke="#f6f6e6" stroke-width="1.6" stroke-linejoin="round" stroke-linecap="round"/>
<polyline points="431.0,270.0 443.6,256.6" fill="none" stroke="#f6f6e6" stroke-width="1.6" stroke-linejoin="round" stroke-linecap="round"/>
<rect x="440.0" y="268" width="10.0" height="19" fill="none" stroke="#3f9a3f" stroke-width="1.1"/>
<polyline points="440.5,283 449.5,283" fill="none" stroke="#3f9a3f" stroke-width="1.0" stroke-linejoin="round" stroke-linecap="round"/>
<polyline points="477.0,257 477.0,270.0" fill="none" stroke="#f6f6e6" stroke-width="1.6" stroke-linejoin="round" stroke-linecap="round"/>
<polyline points="488.0,275.0 502.2,256.6" fill="none" stroke="#f6f6e6" stroke-width="1.6" stroke-linejoin="round" stroke-linecap="round"/>
<rect x="497.2" y="268" width="10.0" height="19" fill="none" stroke="#3f9a3f" stroke-width="1.1"/>
<polyline points="497.7,283 506.7,283" fill="none" stroke="#3f9a3f" stroke-width="1.0" stroke-linejoin="round" stroke-linecap="round"/>
<polyline points="521.0,258.5 521.0,269.0" fill="none" stroke="#f6f6e6" stroke-width="1.6" stroke-linejoin="round" stroke-linecap="round"/>
<polyline points="532.0,273.6 549.0,256.6" fill="none" stroke="#f6f6e6" stroke-width="1.6" stroke-linejoin="round" stroke-linecap="round"/>
<rect x="544.5" y="268" width="10.0" height="19" fill="none" stroke="#3f9a3f" stroke-width="1.1"/>
<polyline points="545.0,283 554.0,283" fill="none" stroke="#3f9a3f" stroke-width="1.0" stroke-linejoin="round" stroke-linecap="round"/>
<polyline points="571.3,261 571.3,269.0" fill="none" stroke="#f6f6e6" stroke-width="1.6" stroke-linejoin="round" stroke-linecap="round"/>
<polyline points="582.3,273.2 594.8,256.6" fill="none" stroke="#f6f6e6" stroke-width="1.6" stroke-linejoin="round" stroke-linecap="round"/>
<rect x="590.4" y="268" width="10.0" height="19" fill="none" stroke="#3f9a3f" stroke-width="1.1"/>
<polyline points="590.9,283 599.9,283" fill="none" stroke="#3f9a3f" stroke-width="1.0" stroke-linejoin="round" stroke-linecap="round"/>
<rect x="98" y="234" width="8" height="8" fill="#efefb4"/>
<rect x="98" y="246.5" width="8" height="7.5" fill="#efefb4"/>
<rect x="98" y="243.3" width="1.8" height="1.9" fill="#2c6e2c"/>
<rect x="104.2" y="243.3" width="1.8" height="1.9" fill="#2c6e2c"/>
<rect x="97.5" y="273.1" width="5.0" height="2.8" fill="#efefb4"/>
<rect x="108.6" y="277.6" width="4.8" height="2.8" fill="#efefb4"/>
<rect x="94" y="273.1" width="4.5" height="2.8" fill="#efefb4"/>
<rect x="104.1" y="271.6" width="3" height="14.8" rx="1.3" fill="#163e16" stroke="#48a848" stroke-width="0.85"/>
<line x1="102.5" y1="278.0" x2="108.5" y2="278.0" stroke="#3f9a3f" stroke-width="0.9"/>
<circle cx="128.0" cy="256.6" r="3.9" fill="#efefb4"/>
<circle cx="128.0" cy="256.6" r="0.9" fill="#6a6a40"/>
<rect x="123.8" y="294.3" width="8.4" height="8.4" fill="#efefb4"/>
<circle cx="128.0" cy="298.5" r="0.9" fill="#6a6a40"/>
<rect x="151" y="236" width="8" height="7.5" fill="#efefb4"/>
<rect x="151" y="249" width="8" height="7.5" fill="#efefb4"/>
<rect x="151" y="244.8" width="1.8" height="2.9" fill="#2c6e2c"/>
<rect x="157.2" y="244.8" width="1.8" height="2.9" fill="#2c6e2c"/>
<rect x="148.1" y="271.3" width="5.0" height="2.8" fill="#efefb4"/>
<rect x="159.2" y="275.90000000000003" width="4.8" height="2.8" fill="#efefb4"/>
<rect x="148.1" y="280.6" width="5.0" height="2.8" fill="#efefb4"/>
<rect x="154.7" y="269.90000000000003" width="3" height="14.8" rx="1.3" fill="#163e16" stroke="#48a848" stroke-width="0.85"/>
<line x1="153.1" y1="276.3" x2="159.1" y2="276.3" stroke="#3f9a3f" stroke-width="0.9"/>
<circle cx="177.3" cy="256.6" r="3.9" fill="#efefb4"/>
<circle cx="177.3" cy="256.6" r="0.9" fill="#6a6a40"/>
<rect x="173.1" y="294.3" width="8.4" height="8.4" fill="#efefb4"/>
<circle cx="177.3" cy="298.5" r="0.9" fill="#6a6a40"/>
<rect x="222" y="232" width="8.5" height="7.8" fill="#efefb4"/>
<rect x="222" y="245" width="8.5" height="7.5" fill="#efefb4"/>
<rect x="222" y="241.10000000000002" width="1.8" height="2.6" fill="#2c6e2c"/>
<rect x="228.7" y="241.10000000000002" width="1.8" height="2.6" fill="#2c6e2c"/>
<rect x="223.2" y="264.1" width="5.0" height="2.8" fill="#efefb4"/>
<rect x="234.29999999999998" y="268.6" width="4.8" height="2.8" fill="#efefb4"/>
<rect x="223.2" y="273.3" width="5.0" height="2.8" fill="#efefb4"/>
<rect x="229.79999999999998" y="263.1" width="3" height="14.8" rx="1.3" fill="#163e16" stroke="#48a848" stroke-width="0.85"/>
<line x1="228.2" y1="269.5" x2="234.2" y2="269.5" stroke="#3f9a3f" stroke-width="0.9"/>
<circle cx="249.7" cy="256.6" r="3.9" fill="#efefb4"/>
<circle cx="249.7" cy="256.6" r="0.9" fill="#6a6a40"/>
<rect x="245.5" y="294.3" width="8.4" height="8.4" fill="#efefb4"/>
<circle cx="249.7" cy="298.5" r="0.9" fill="#6a6a40"/>
<rect x="261" y="232" width="8" height="7.5" fill="#efefb4"/>
<rect x="261" y="245" width="8" height="7.5" fill="#efefb4"/>
<rect x="261" y="240.8" width="1.8" height="2.9" fill="#2c6e2c"/>
<rect x="267.2" y="240.8" width="1.8" height="2.9" fill="#2c6e2c"/>
<rect x="262.3" y="264.1" width="5.0" height="2.8" fill="#efefb4"/>
<rect x="273.40000000000003" y="268.6" width="4.8" height="2.8" fill="#efefb4"/>
<rect x="262.3" y="273.3" width="5.0" height="2.8" fill="#efefb4"/>
<rect x="268.90000000000003" y="263.1" width="3" height="14.8" rx="1.3" fill="#163e16" stroke="#48a848" stroke-width="0.85"/>
<line x1="267.3" y1="269.5" x2="273.3" y2="269.5" stroke="#3f9a3f" stroke-width="0.9"/>
<circle cx="290.2" cy="256.6" r="3.9" fill="#efefb4"/>
<circle cx="290.2" cy="256.6" r="0.9" fill="#6a6a40"/>
<rect x="286.0" y="294.3" width="8.4" height="8.4" fill="#efefb4"/>
<circle cx="290.2" cy="298.5" r="0.9" fill="#6a6a40"/>
<rect x="301" y="232" width="8" height="7.2" fill="#efefb4"/>
<rect x="301" y="245" width="8" height="7.5" fill="#efefb4"/>
<rect x="301" y="240.5" width="1.8" height="3.2" fill="#2c6e2c"/>
<rect x="307.2" y="240.5" width="1.8" height="3.2" fill="#2c6e2c"/>
<rect x="302.0" y="264.1" width="5.0" height="2.8" fill="#efefb4"/>
<rect x="313.1" y="268.6" width="4.8" height="2.8" fill="#efefb4"/>
<rect x="302.0" y="273.6" width="5.0" height="2.8" fill="#efefb4"/>
<rect x="308.6" y="263.1" width="3" height="14.8" rx="1.3" fill="#163e16" stroke="#48a848" stroke-width="0.85"/>
<line x1="307.0" y1="269.5" x2="313.0" y2="269.5" stroke="#3f9a3f" stroke-width="0.9"/>
<circle cx="328.4" cy="256.6" r="3.9" fill="#efefb4"/>
<circle cx="328.4" cy="256.6" r="0.9" fill="#6a6a40"/>
<rect x="324.2" y="294.3" width="8.4" height="8.4" fill="#efefb4"/>
<circle cx="328.4" cy="298.5" r="0.9" fill="#6a6a40"/>
<rect x="339.5" y="231.3" width="8.5" height="7.5" fill="#efefb4"/>
<rect x="339.5" y="244.5" width="8.5" height="7.5" fill="#efefb4"/>
<rect x="339.5" y="240.10000000000002" width="1.8" height="3.1" fill="#2c6e2c"/>
<rect x="346.2" y="240.10000000000002" width="1.8" height="3.1" fill="#2c6e2c"/>
<rect x="340.8" y="264.1" width="5.0" height="2.8" fill="#efefb4"/>
<rect x="351.90000000000003" y="268.6" width="4.8" height="2.8" fill="#efefb4"/>
<rect x="340.8" y="274.1" width="5.0" height="2.8" fill="#efefb4"/>
<rect x="347.40000000000003" y="263.1" width="3" height="14.8" rx="1.3" fill="#163e16" stroke="#48a848" stroke-width="0.85"/>
<line x1="345.8" y1="269.5" x2="351.8" y2="269.5" stroke="#3f9a3f" stroke-width="0.9"/>
<circle cx="366.9" cy="256.6" r="3.9" fill="#efefb4"/>
<circle cx="366.9" cy="256.6" r="0.9" fill="#6a6a40"/>
<rect x="362.7" y="294.3" width="8.4" height="8.4" fill="#efefb4"/>
<circle cx="366.9" cy="298.5" r="0.9" fill="#6a6a40"/>
<rect x="377" y="232" width="8.5" height="7" fill="#efefb4"/>
<rect x="377" y="245" width="8.5" height="7" fill="#efefb4"/>
<rect x="377" y="240.3" width="1.8" height="3.4" fill="#2c6e2c"/>
<rect x="383.7" y="240.3" width="1.8" height="3.4" fill="#2c6e2c"/>
<rect x="378.5" y="264.1" width="5.0" height="2.8" fill="#efefb4"/>
<rect x="389.6" y="268.6" width="4.8" height="2.8" fill="#efefb4"/>
<rect x="378.5" y="274.1" width="5.0" height="2.8" fill="#efefb4"/>
<rect x="385.1" y="263.1" width="3" height="14.8" rx="1.3" fill="#163e16" stroke="#48a848" stroke-width="0.85"/>
<line x1="383.5" y1="269.5" x2="389.5" y2="269.5" stroke="#3f9a3f" stroke-width="0.9"/>
<circle cx="405.0" cy="256.6" r="3.9" fill="#efefb4"/>
<circle cx="405.0" cy="256.6" r="0.9" fill="#6a6a40"/>
<rect x="400.8" y="294.3" width="8.4" height="8.4" fill="#efefb4"/>
<circle cx="405.0" cy="298.5" r="0.9" fill="#6a6a40"/>
<rect x="416" y="231.5" width="8" height="7.5" fill="#efefb4"/>
<rect x="416" y="245" width="8" height="7" fill="#efefb4"/>
<rect x="416" y="240.3" width="1.8" height="3.4" fill="#2c6e2c"/>
<rect x="422.2" y="240.3" width="1.8" height="3.4" fill="#2c6e2c"/>
<rect x="417.5" y="264.1" width="5.0" height="2.8" fill="#efefb4"/>
<rect x="428.6" y="268.6" width="4.8" height="2.8" fill="#efefb4"/>
<rect x="417.5" y="273.90000000000003" width="5.0" height="2.8" fill="#efefb4"/>
<rect x="424.1" y="263.1" width="3" height="14.8" rx="1.3" fill="#163e16" stroke="#48a848" stroke-width="0.85"/>
<line x1="422.5" y1="269.5" x2="428.5" y2="269.5" stroke="#3f9a3f" stroke-width="0.9"/>
<circle cx="443.6" cy="256.6" r="3.9" fill="#efefb4"/>
<circle cx="443.6" cy="256.6" r="0.9" fill="#6a6a40"/>
<rect x="439.4" y="294.3" width="8.4" height="8.4" fill="#efefb4"/>
<circle cx="443.6" cy="298.5" r="0.9" fill="#6a6a40"/>
<rect x="473" y="237" width="8" height="7" fill="#efefb4"/>
<rect x="473" y="250" width="8" height="7" fill="#efefb4"/>
<rect x="473" y="245.3" width="1.8" height="3.4" fill="#2c6e2c"/>
<rect x="479.2" y="245.3" width="1.8" height="3.4" fill="#2c6e2c"/>
<rect x="474.5" y="268.6" width="5.0" height="2.8" fill="#efefb4"/>
<rect x="485.6" y="273.6" width="4.8" height="2.8" fill="#efefb4"/>
<rect x="474.5" y="277.40000000000003" width="5.0" height="2.8" fill="#efefb4"/>
<rect x="481.1" y="267.3" width="3" height="14.8" rx="1.3" fill="#163e16" stroke="#48a848" stroke-width="0.85"/>
<line x1="479.5" y1="273.7" x2="485.5" y2="273.7" stroke="#3f9a3f" stroke-width="0.9"/>
<circle cx="502.2" cy="256.6" r="3.9" fill="#efefb4"/>
<circle cx="502.2" cy="256.6" r="0.9" fill="#6a6a40"/>
<rect x="498.0" y="294.3" width="8.4" height="8.4" fill="#efefb4"/>
<circle cx="502.2" cy="298.5" r="0.9" fill="#6a6a40"/>
<rect x="517" y="238" width="8" height="8" fill="#efefb4"/>
<rect x="517" y="251.5" width="8" height="7.0" fill="#efefb4"/>
<rect x="517" y="247.3" width="1.8" height="2.9" fill="#2c6e2c"/>
<rect x="523.2" y="247.3" width="1.8" height="2.9" fill="#2c6e2c"/>
<rect x="518.5" y="267.6" width="5.0" height="2.8" fill="#efefb4"/>
<rect x="529.6" y="272.20000000000005" width="4.8" height="2.8" fill="#efefb4"/>
<rect x="518.5" y="276.3" width="5.0" height="2.8" fill="#efefb4"/>
<rect x="525.1" y="266.6" width="3" height="14.8" rx="1.3" fill="#163e16" stroke="#48a848" stroke-width="0.85"/>
<line x1="523.5" y1="273.0" x2="529.5" y2="273.0" stroke="#3f9a3f" stroke-width="0.9"/>
<circle cx="549.0" cy="256.6" r="3.9" fill="#efefb4"/>
<circle cx="549.0" cy="256.6" r="0.9" fill="#6a6a40"/>
<rect x="544.8" y="294.3" width="8.4" height="8.4" fill="#efefb4"/>
<circle cx="549.0" cy="298.5" r="0.9" fill="#6a6a40"/>
<rect x="566" y="240.5" width="8.5" height="7.5" fill="#efefb4"/>
<rect x="566" y="253.5" width="8.5" height="7.5" fill="#efefb4"/>
<rect x="566" y="249.3" width="1.8" height="2.9" fill="#2c6e2c"/>
<rect x="572.7" y="249.3" width="1.8" height="2.9" fill="#2c6e2c"/>
<rect x="568.8" y="267.6" width="5.0" height="2.8" fill="#efefb4"/>
<rect x="579.9" y="271.8" width="4.8" height="2.8" fill="#efefb4"/>
<rect x="568.8" y="276.8" width="5.0" height="2.8" fill="#efefb4"/>
<rect x="575.4" y="265.90000000000003" width="3" height="14.8" rx="1.3" fill="#163e16" stroke="#48a848" stroke-width="0.85"/>
<line x1="573.8" y1="272.3" x2="579.8" y2="272.3" stroke="#3f9a3f" stroke-width="0.9"/>
<circle cx="594.8" cy="256.6" r="3.9" fill="#efefb4"/>
<circle cx="594.8" cy="256.6" r="0.9" fill="#6a6a40"/>
<rect x="590.6" y="294.3" width="8.4" height="8.4" fill="#efefb4"/>
<circle cx="594.8" cy="298.5" r="0.9" fill="#6a6a40"/>
<rect x="564.2" y="182.2" width="8.6" height="7.0" fill="#efefb4"/>
<rect x="564.2" y="195.4" width="8.6" height="6.8" fill="#efefb4"/>
<rect x="564.2" y="190.5" width="1.8" height="3.5" fill="#2c6e2c"/>
<rect x="571" y="190.5" width="1.8" height="3.5" fill="#2c6e2c"/>
<rect x="304" y="107.6" width="7.2" height="7.9" fill="#efefb4"/>
<rect x="317" y="107.6" width="7.8" height="7.9" fill="#efefb4"/>
<rect x="312.5" y="106.8" width="3.2" height="1.6" fill="#2c6e2c"/>
<rect x="312.5" y="114.7" width="3.2" height="1.6" fill="#2c6e2c"/>
<rect x="345" y="79.2" width="8.7" height="7.2" fill="#efefb4"/>
<rect x="345" y="92.4" width="8.7" height="7.1" fill="#efefb4"/>
<rect x="345" y="87.7" width="1.8" height="3.4" fill="#2c6e2c"/>
<rect x="351.9" y="87.7" width="1.8" height="3.4" fill="#2c6e2c"/>
<rect x="382.3" y="80" width="7.1" height="7.4" fill="#efefb4"/>
<rect x="395.3" y="80" width="7.2" height="7.4" fill="#efefb4"/>
<rect x="390.75" y="79.2" width="3.2" height="1.6" fill="#2c6e2c"/>
<rect x="390.75" y="86.60000000000001" width="3.2" height="1.6" fill="#2c6e2c"/>
<rect x="427.5" y="83.8" width="7.5" height="7.5" fill="#efefb4"/>
<rect x="427.5" y="96.8" width="7.5" height="7.4" fill="#efefb4"/>
<rect x="427.5" y="92.6" width="1.8" height="2.9" fill="#2c6e2c"/>
<rect x="433.2" y="92.6" width="1.8" height="2.9" fill="#2c6e2c"/>
<rect x="455.7" y="135" width="7.3" height="7.3" fill="#efefb4"/>
<rect x="468.5" y="135" width="7.5" height="7.3" fill="#efefb4"/>
<rect x="464.15" y="134.2" width="3.2" height="1.6" fill="#2c6e2c"/>
<rect x="464.15" y="141.5" width="3.2" height="1.6" fill="#2c6e2c"/>
<rect x="559.4" y="108" width="8.0" height="7.2" fill="#efefb4"/>
<rect x="559.4" y="121.6" width="8.0" height="7.2" fill="#efefb4"/>
<rect x="559.4" y="116.5" width="1.8" height="3.8" fill="#2c6e2c"/>
<rect x="565.6" y="116.5" width="1.8" height="3.8" fill="#2c6e2c"/>
<rect x="617.8" y="154.2" width="7.4" height="8.4" fill="#efefb4"/>
<rect x="631.4" y="154.2" width="7.2" height="8.4" fill="#efefb4"/>
<rect x="626.6999999999999" y="153.39999999999998" width="3.2" height="1.6" fill="#2c6e2c"/>
<rect x="626.6999999999999" y="161.79999999999998" width="3.2" height="1.6" fill="#2c6e2c"/>
<rect x="150.5" y="317.6" width="7.5" height="7.4" fill="#efefb4"/>
<rect x="163.4" y="317.6" width="7.6" height="7.4" fill="#efefb4"/>
<rect x="159.1" y="316.8" width="3.2" height="1.6" fill="#2c6e2c"/>
<rect x="159.1" y="324.2" width="3.2" height="1.6" fill="#2c6e2c"/>
<path d="M256.8,175.8 H425.9 V185.5 L423.5,188.2 L425.9,191 V200.6 H256.8 Z" fill="none" stroke="#368a36" stroke-width="1.1"/>
<circle cx="263.4" cy="206.0" r="2.9" fill="#000" stroke="#f6f6e6" stroke-width="1.4"/>
<circle cx="263.4" cy="170.0" r="2.9" fill="#000" stroke="#f6f6e6" stroke-width="1.4"/>
<circle cx="275.4" cy="206.0" r="2.9" fill="#000" stroke="#f6f6e6" stroke-width="1.4"/>
<circle cx="275.4" cy="170.0" r="2.9" fill="#000" stroke="#f6f6e6" stroke-width="1.4"/>
<circle cx="287.4" cy="206.0" r="2.9" fill="#000" stroke="#f6f6e6" stroke-width="1.4"/>
<circle cx="287.4" cy="170.0" r="2.9" fill="#000" stroke="#f6f6e6" stroke-width="1.4"/>
<circle cx="299.4" cy="206.0" r="2.9" fill="#000" stroke="#f6f6e6" stroke-width="1.4"/>
<circle cx="299.4" cy="170.0" r="2.9" fill="#000" stroke="#f6f6e6" stroke-width="1.4"/>
<circle cx="311.4" cy="206.0" r="2.9" fill="#000" stroke="#f6f6e6" stroke-width="1.4"/>
<circle cx="311.4" cy="170.0" r="2.9" fill="#000" stroke="#f6f6e6" stroke-width="1.4"/>
<circle cx="323.4" cy="206.0" r="2.9" fill="#000" stroke="#f6f6e6" stroke-width="1.4"/>
<circle cx="323.4" cy="170.0" r="2.9" fill="#000" stroke="#f6f6e6" stroke-width="1.4"/>
<circle cx="335.4" cy="206.0" r="2.9" fill="#000" stroke="#f6f6e6" stroke-width="1.4"/>
<circle cx="335.4" cy="170.0" r="2.9" fill="#000" stroke="#f6f6e6" stroke-width="1.4"/>
<circle cx="347.4" cy="206.0" r="2.9" fill="#000" stroke="#f6f6e6" stroke-width="1.4"/>
<circle cx="347.4" cy="170.0" r="2.9" fill="#000" stroke="#f6f6e6" stroke-width="1.4"/>
<circle cx="359.4" cy="206.0" r="2.9" fill="#000" stroke="#f6f6e6" stroke-width="1.4"/>
<circle cx="359.4" cy="170.0" r="2.9" fill="#000" stroke="#f6f6e6" stroke-width="1.4"/>
<circle cx="371.4" cy="206.0" r="2.9" fill="#000" stroke="#f6f6e6" stroke-width="1.4"/>
<circle cx="371.4" cy="170.0" r="2.9" fill="#000" stroke="#f6f6e6" stroke-width="1.4"/>
<circle cx="383.4" cy="206.0" r="2.9" fill="#000" stroke="#f6f6e6" stroke-width="1.4"/>
<circle cx="383.4" cy="170.0" r="2.9" fill="#000" stroke="#f6f6e6" stroke-width="1.4"/>
<circle cx="395.4" cy="206.0" r="2.9" fill="#000" stroke="#f6f6e6" stroke-width="1.4"/>
<circle cx="395.4" cy="170.0" r="2.9" fill="#000" stroke="#f6f6e6" stroke-width="1.4"/>
<circle cx="407.4" cy="206.0" r="2.9" fill="#000" stroke="#f6f6e6" stroke-width="1.4"/>
<circle cx="407.4" cy="170.0" r="2.9" fill="#000" stroke="#f6f6e6" stroke-width="1.4"/>
<circle cx="419.4" cy="206.0" r="2.9" fill="#000" stroke="#f6f6e6" stroke-width="1.4"/>
<rect x="415.3" y="166" width="8.4" height="8.3" fill="#efefb4"/>
<rect x="418.1" y="168.7" width="2.8" height="2.8" fill="#111"/>
<circle cx="408.8" cy="94.2" r="1.8" fill="#000" stroke="#f6f6e6" stroke-width="1.1"/>
<circle cx="408.8" cy="130.9" r="1.8" fill="#000" stroke="#f6f6e6" stroke-width="1.1"/>
<circle cx="576" cy="93" r="1.8" fill="#000" stroke="#f6f6e6" stroke-width="1.1"/>
<circle cx="608" cy="154.5" r="1.8" fill="#000" stroke="#f6f6e6" stroke-width="1.1"/>
<circle cx="576.5" cy="207.3" r="1.8" fill="#000" stroke="#f6f6e6" stroke-width="1.1"/>
<circle cx="607.7" cy="283.1" r="1.8" fill="#000" stroke="#f6f6e6" stroke-width="1.1"/>
<path d="M661,88 L661.5,83 L663.5,80.5" fill="none" stroke="#3f9a3f" stroke-width="1.1"/>
<path d="M671.5,81 L675,83.5 L677.5,86.5" fill="none" stroke="#3f9a3f" stroke-width="1.1"/>
<polyline points="667,80.2 676,86 676.5,92 680,96" fill="none" stroke="#f6f6e6" stroke-width="1.6" stroke-linejoin="round" stroke-linecap="round"/>
<rect x="661.2" y="89" width="3.2" height="3.8" fill="#efefb4"/>
<rect x="670.2" y="89.5" width="3.6" height="3.3" fill="#efefb4"/>
<rect x="665.2" y="78.3" width="3.8" height="3.7" fill="#efefb4"/>
<rect x="628.7" y="222" width="3.7" height="3" fill="#efefb4"/>
<rect x="639.8" y="218" width="3.7" height="2.5" fill="#efefb4"/>
<rect x="639.8" y="227.6" width="3.7" height="2.8" fill="#efefb4"/>
<path d="M634,218 L638,217.5 M634,231 L637,233" fill="none" stroke="#3f9a3f" stroke-width="1"/>
<line x1="94" y1="335.5" x2="680" y2="335.5" stroke="#4e3468" stroke-width="1.1"/>
</g>
</svg>
<div class="a" style="left:94px;top:68px;width:586px;height:1px;background:#6a6a6a"></div>

<!-- pcb scrollbars -->
<div class="a" style="left:680px;top:68px;width:14px;height:397px;background:#f7f7f7"></div>
<div class="a" style="left:681px;top:68.5px;width:10.5px;height:10.5px;background:#f0f0f0;border-right:1px solid #6e6e6e;border-bottom:1px solid #6e6e6e;border-top:1px solid #fff;border-left:1px solid #fff"></div>
<svg class="a" style="left:681px;top:68.5px" width="11" height="11"><path d="M3,6.5 L5.5,4 L8,6.5 Z" fill="#000"/></svg>
<div class="a" style="left:680.5px;top:293.8px;width:10.5px;height:10.5px;background:#eeeeee;border-right:1px solid #9a9a9a;border-bottom:1px solid #9a9a9a"></div>
<div class="a" style="left:681px;top:454px;width:10.5px;height:10.5px;background:#f0f0f0;border-right:1px solid #6e6e6e;border-bottom:1px solid #6e6e6e;border-top:1px solid #fff;border-left:1px solid #fff"></div>
<svg class="a" style="left:681px;top:454px" width="11" height="11"><path d="M3,4.5 L5.5,7 L8,4.5 Z" fill="#000"/></svg>
<div class="a" style="left:93px;top:465px;width:587px;height:11px;background:#f6f6f6"></div>
<div class="a" style="left:93px;top:465px;width:11px;height:11px;background:#f0f0f0;border-right:1px solid #6e6e6e;border-bottom:1px solid #6e6e6e"></div>
<svg class="a" style="left:93px;top:465px" width="11" height="11"><path d="M6.5,3 L4,5.5 L6.5,8 Z" fill="#000"/></svg>
<div class="a" style="left:394.4px;top:465px;width:11.6px;height:11.5px;background:#ececec;border-right:1px solid #777;border-bottom:1px solid #777"></div>
<div class="a" style="left:669px;top:466px;width:10.5px;height:10.5px;background:#f0f0f0;border-right:1px solid #6e6e6e;border-bottom:1px solid #6e6e6e"></div>
<svg class="a" style="left:669px;top:466px" width="11" height="11"><path d="M4.5,3 L7,5.5 L4.5,8 Z" fill="#000"/></svg>
<div class="a" style="left:0;top:476px;width:800px;height:1px;background:#c4c4c4"></div>
<div class="a" style="left:0;top:477.5px;width:800px;height:1px;background:#fff"></div>

<!-- right panel -->
<div class="a" style="left:694px;top:68px;width:106px;height:408px;background:#efefef"></div>
<div class="a" style="left:764px;top:68px;width:36px;height:14px;background:#f7f7f7"></div>
<div class="a" style="left:721px;top:70.5px;width:1.2px;height:11px;background:#555"></div>
<div class="a" style="left:698px;top:100px;width:102px;height:163px;background:#fff;border-left:1px solid #7a7a7a;border-top:1px solid #b8b8b8"></div>
<div class="a" style="left:699px;top:100.6px;width:71.5px;height:14px;background:#3c8fe6"></div>
<div class="a" style="left:699px;top:114.1px;width:101px;height:1px;background:#dcdcdc"></div><div class="a" style="left:699px;top:128.1px;width:101px;height:1px;background:#dcdcdc"></div><div class="a" style="left:771px;top:115.6px;width:29px;height:12.5px;border-left:1.5px solid #555;border-top:1px solid #777"></div><div class="a" style="left:699px;top:142.1px;width:101px;height:1px;background:#dcdcdc"></div><div class="a" style="left:771px;top:129.6px;width:29px;height:12.5px;border-left:1.5px solid #555;border-top:1px solid #777"></div><div class="a" style="left:699px;top:156.1px;width:101px;height:1px;background:#dcdcdc"></div><div class="a" style="left:771px;top:143.6px;width:29px;height:12.5px;border-left:1.5px solid #555;border-top:1px solid #777"></div><div class="a" style="left:699px;top:170.1px;width:101px;height:1px;background:#dcdcdc"></div><div class="a" style="left:699px;top:184.1px;width:101px;height:1px;background:#dcdcdc"></div><div class="a" style="left:771px;top:171.6px;width:29px;height:12.5px;border-left:1.5px solid #555;border-top:1px solid #777"></div><div class="a" style="left:699px;top:198.1px;width:101px;height:1px;background:#dcdcdc"></div>
<div class="a" style="left:770.5px;top:100.6px;width:1px;height:98px;background:#d4d4d4"></div>
<div class="a" style="left:693px;top:271px;width:107px;height:1px;background:#a0a0a0"></div>
<div class="a" style="left:693px;top:272px;width:107px;height:1px;background:#fff"></div>
<svg class="a" style="left:774px;top:276px" width="12" height="14" viewBox="0 0 12 14">
<rect x="6" y="2" width="3" height="11" fill="#444"/><rect x="3" y="5" width="2" height="6" fill="#666"/>
</svg>
<div class="a" style="left:795px;top:275px;width:6px;height:16px;border:1px solid #bbb;background:#fff"></div>
<div class="a" style="left:698px;top:293.5px;width:102px;height:81px;background:#fff;border-left:1px solid #6a6a6a;border-top:1px solid #6a6a6a"></div>
<div class="a" style="left:698px;top:391.5px;width:102px;height:78.5px;background:#fff;border-left:1px solid #6a6a6a;border-top:1px solid #6a6a6a"></div>
<svg class="a" style="left:0;top:0" width="800" height="486" viewBox="0 0 800 486" font-family="Liberation Sans"><text x="697" y="79.2" font-size="8.6" fill="#0e0e0e" stroke="#0e0e0e" stroke-width="0.18" textLength="18" lengthAdjust="spacingAndGlyphs">Слои</text><text x="726" y="79.2" font-size="8.6" fill="#0e0e0e" stroke="#0e0e0e" stroke-width="0.18" textLength="31" lengthAdjust="spacingAndGlyphs">Объекты</text><text x="765" y="77.7" font-size="8.6" fill="#0e0e0e" stroke="#0e0e0e" stroke-width="0.18" textLength="32" lengthAdjust="spacingAndGlyphs">Свойства</text><text x="699" y="94.4" font-size="8.8" fill="#2a8c78" stroke="#2a8c78" stroke-width="0.18" font-weight="bold" textLength="20.5" lengthAdjust="spacingAndGlyphs">Сеть:</text><text x="700.8" y="109.8" font-size="8.3" fill="#fff" stroke="#fff" stroke-width="0.18" textLength="35.5" lengthAdjust="spacingAndGlyphs">Имя сети:</text><text x="772.6" y="109.8" font-size="8.3" fill="#0e0e0e" stroke="#0e0e0e" stroke-width="0.18" textLength="28" lengthAdjust="spacingAndGlyphs">Сеть 43</text><text x="700.8" y="123.8" font-size="8.3" fill="#0e0e0e" stroke="#0e0e0e" stroke-width="0.18" textLength="69" lengthAdjust="spacingAndGlyphs">Режим трассировки</text><text x="772.6" y="123.8" font-size="8.3" fill="#0e0e0e" stroke="#0e0e0e" stroke-width="0.18" textLength="27" lengthAdjust="spacingAndGlyphs">Только</text><text x="700.8" y="137.8" font-size="8.3" fill="#0e0e0e" stroke="#0e0e0e" stroke-width="0.18" textLength="42.5" lengthAdjust="spacingAndGlyphs">Класс сетей</text><text x="772.6" y="137.8" font-size="8.3" fill="#0e0e0e" stroke="#0e0e0e" stroke-width="0.18" textLength="26" lengthAdjust="spacingAndGlyphs">Default</text><text x="700.8" y="151.8" font-size="8.3" fill="#0e0e0e" stroke="#0e0e0e" stroke-width="0.18" textLength="36" lengthAdjust="spacingAndGlyphs">Цвет сети:</text><text x="772.6" y="151.8" font-size="8.3" fill="#0e0e0e" stroke="#0e0e0e" stroke-width="0.18" textLength="33" lengthAdjust="spacingAndGlyphs">По слоям</text><text x="700.8" y="165.8" font-size="8.3" fill="#0e0e0e" stroke="#0e0e0e" stroke-width="0.18" textLength="63.3" lengthAdjust="spacingAndGlyphs">Ширина линии (W):</text><text x="772.6" y="165.8" font-size="8.3" fill="#0e0e0e" stroke="#0e0e0e" stroke-width="0.18" textLength="15" lengthAdjust="spacingAndGlyphs">0,33</text><text x="700.8" y="179.8" font-size="8.3" fill="#0e0e0e" stroke="#0e0e0e" stroke-width="0.18" textLength="53.2" lengthAdjust="spacingAndGlyphs">Слои сегмента:</text><text x="772.6" y="179.8" font-size="8.3" fill="#0e0e0e" stroke="#0e0e0e" stroke-width="0.18" textLength="31" lengthAdjust="spacingAndGlyphs">Верхний</text><text x="700.8" y="193.8" font-size="8.3" fill="#0e0e0e" stroke="#0e0e0e" stroke-width="0.18" textLength="54.8" lengthAdjust="spacingAndGlyphs">Ширина трассы:</text><text x="772.6" y="193.8" font-size="8.3" fill="#0e0e0e" stroke="#0e0e0e" stroke-width="0.18" textLength="15" lengthAdjust="spacingAndGlyphs">0,33</text><text x="698" y="285.7" font-size="8.3" fill="#0e0e0e" stroke="#0e0e0e" stroke-width="0.18" textLength="65" lengthAdjust="spacingAndGlyphs">Менеджер проекта</text><text x="698" y="387.2" font-size="8.3" fill="#0e0e0e" stroke="#0e0e0e" stroke-width="0.18" textLength="70" lengthAdjust="spacingAndGlyphs">Выводы компонента</text><text x="700.6" y="301.7" font-size="8.6" fill="#0a0a0a" stroke="#0a0a0a" stroke-width="0.18" textLength="64.1" lengthAdjust="spacingAndGlyphs">U3 - PIC16F886_SP</text><text x="700.6" y="310.32" font-size="8.6" fill="#0a0a0a" stroke="#0a0a0a" stroke-width="0.18" textLength="41" lengthAdjust="spacingAndGlyphs">D3 - 1N4148</text><text x="700.6" y="318.94" font-size="8.6" fill="#0a0a0a" stroke="#0a0a0a" stroke-width="0.18" textLength="41" lengthAdjust="spacingAndGlyphs">D4 - 1N4148</text><text x="700.6" y="327.56" font-size="8.6" fill="#0a0a0a" stroke="#0a0a0a" stroke-width="0.18" textLength="41" lengthAdjust="spacingAndGlyphs">D6 - 1N4148</text><text x="700.6" y="336.18" font-size="8.6" fill="#0a0a0a" stroke="#0a0a0a" stroke-width="0.18" textLength="41" lengthAdjust="spacingAndGlyphs">D5 - 1N4148</text><text x="700.6" y="344.8" font-size="8.6" fill="#0a0a0a" stroke="#0a0a0a" stroke-width="0.18" textLength="41" lengthAdjust="spacingAndGlyphs">D2 - 1N4148</text><text x="700.6" y="353.42" font-size="8.6" fill="#0a0a0a" stroke="#0a0a0a" stroke-width="0.18" textLength="45.2" lengthAdjust="spacingAndGlyphs">D10 - 1N4148</text><text x="700.6" y="362.04" font-size="8.6" fill="#0a0a0a" stroke="#0a0a0a" stroke-width="0.18" textLength="45.2" lengthAdjust="spacingAndGlyphs">D11 - 1N4148</text><text x="700.6" y="370.66" font-size="8.6" fill="#0a0a0a" stroke="#0a0a0a" stroke-width="0.18" textLength="40.7" lengthAdjust="spacingAndGlyphs">D1 - 1N4148</text></svg>
<!-- status bar -->
<div class="a" style="left:0;top:478px;width:800px;height:8px;background:#f0f0f0"></div>
<div class="a" style="left:703.8px;top:479px;width:64px;height:8px;border-left:1px solid #b4b4b4;border-top:1px solid #b4b4b4"></div>
<div class="a" style="left:770px;top:479px;width:30px;height:8px;border-left:1px solid #b4b4b4;border-top:1px solid #b4b4b4"></div>
<div class="a" style="left:705.5px;top:481px;font-size:8.0px;color:#111;line-height:10px;white-space:nowrap">X=76,68 mm</div>
<div class="a" style="left:772px;top:481px;font-size:8.0px;color:#111;line-height:10px;white-space:nowrap">Y=-102,5</div>
<div class="a" style="left:0;top:0;width:2px;height:486px;background:#7e7e7e"></div>
</body></html>
